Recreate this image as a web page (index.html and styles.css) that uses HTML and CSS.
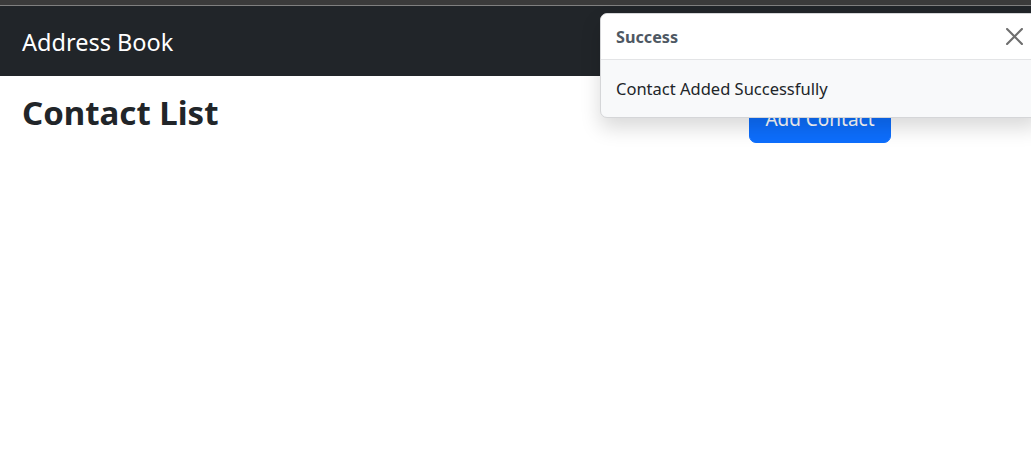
FILE: index.html
```html
<!DOCTYPE html>
<html lang="en">
<head>
<meta charset="utf-8">
<title>Address Book</title>
<link rel="stylesheet" href="styles.css">
</head>
<body>
<div class="chrome"></div>
<nav class="navbar">
  <a class="brand" href="#">Address Book</a>
</nav>
<main class="main">
  <div class="title-row">
    <h2 class="title">Contact List</h2>
    <button class="btn-primary" type="button">Add Contact</button>
  </div>
</main>
<div class="toast">
  <div class="toast-header">
    <strong class="toast-title">Success</strong>
    <button class="btn-close" type="button" aria-label="Close">
      <svg viewBox="0 0 16 16" width="17" height="17"><path d="M1 1L15 15M15 1L1 15" stroke="currentColor" stroke-width="2" stroke-linecap="round" fill="none"/></svg>
    </button>
  </div>
  <div class="toast-body">Contact Added Successfully</div>
</div>
</body>
</html>
```
FILE: styles.css
```css
* { box-sizing: border-box; }
html, body { margin: 0; padding: 0; }
body {
  font-family: "Noto Sans", "Open Sans", sans-serif;
  color: #212529;
  background: #fff;
  width: 1031px;
  height: 455px;
  overflow: hidden;
  position: relative;
}
.chrome {
  height: 6px;
  background: #3b3b3b;
  border-bottom: 1px solid #808080;
}
.navbar {
  height: 70px;
  background: #212529;
  display: flex;
  align-items: center;
  padding: 3px 22px 0;
}
.brand {
  color: #fff;
  text-decoration: none;
  font-size: 23.5px;
  line-height: 37.5px;
}
.main {
  padding: 17px 22px 0;
}
.title-row {
  width: 869px;
  display: flex;
  justify-content: space-between;
  align-items: flex-start;
}
.title {
  margin: 0;
  font-size: 33px;
  line-height: 40px;
  font-weight: 700;
}
.btn-primary {
  margin-top: 2px;
  width: 142px;
  height: 48px;
  background: #0d6efd;
  border: 1px solid #0d6efd;
  border-radius: 7px;
  color: #fff;
  font-family: inherit;
  font-size: 19px;
  line-height: 30px;
  padding: 0;
}
.toast {
  position: absolute;
  top: 13px;
  left: 600px;
  width: 440px;
  background: #f8f9fa;
  border: 1px solid #d5d6d8;
  border-radius: 7px;
  box-shadow: 0 10px 20px rgba(0, 0, 0, 0.15);
  overflow: hidden;
}
.toast-header {
  display: flex;
  align-items: center;
  justify-content: space-between;
  height: 46px;
  padding: 0 15px;
  background: #fff;
  border-bottom: 1px solid #e3e4e6;
}
.toast-title {
  font-size: 16.2px;
  font-weight: 700;
  color: #4e5863;
}
.btn-close {
  background: none;
  border: 0;
  padding: 0;
  margin-right: 1px;
  width: 17px;
  height: 17px;
  color: #6e6e6e;
  display: flex;
}
.toast-body {
  height: 57px;
  padding: 0 15px;
  display: flex;
  align-items: center;
  font-size: 16.5px;
  color: #212529;
}
```
